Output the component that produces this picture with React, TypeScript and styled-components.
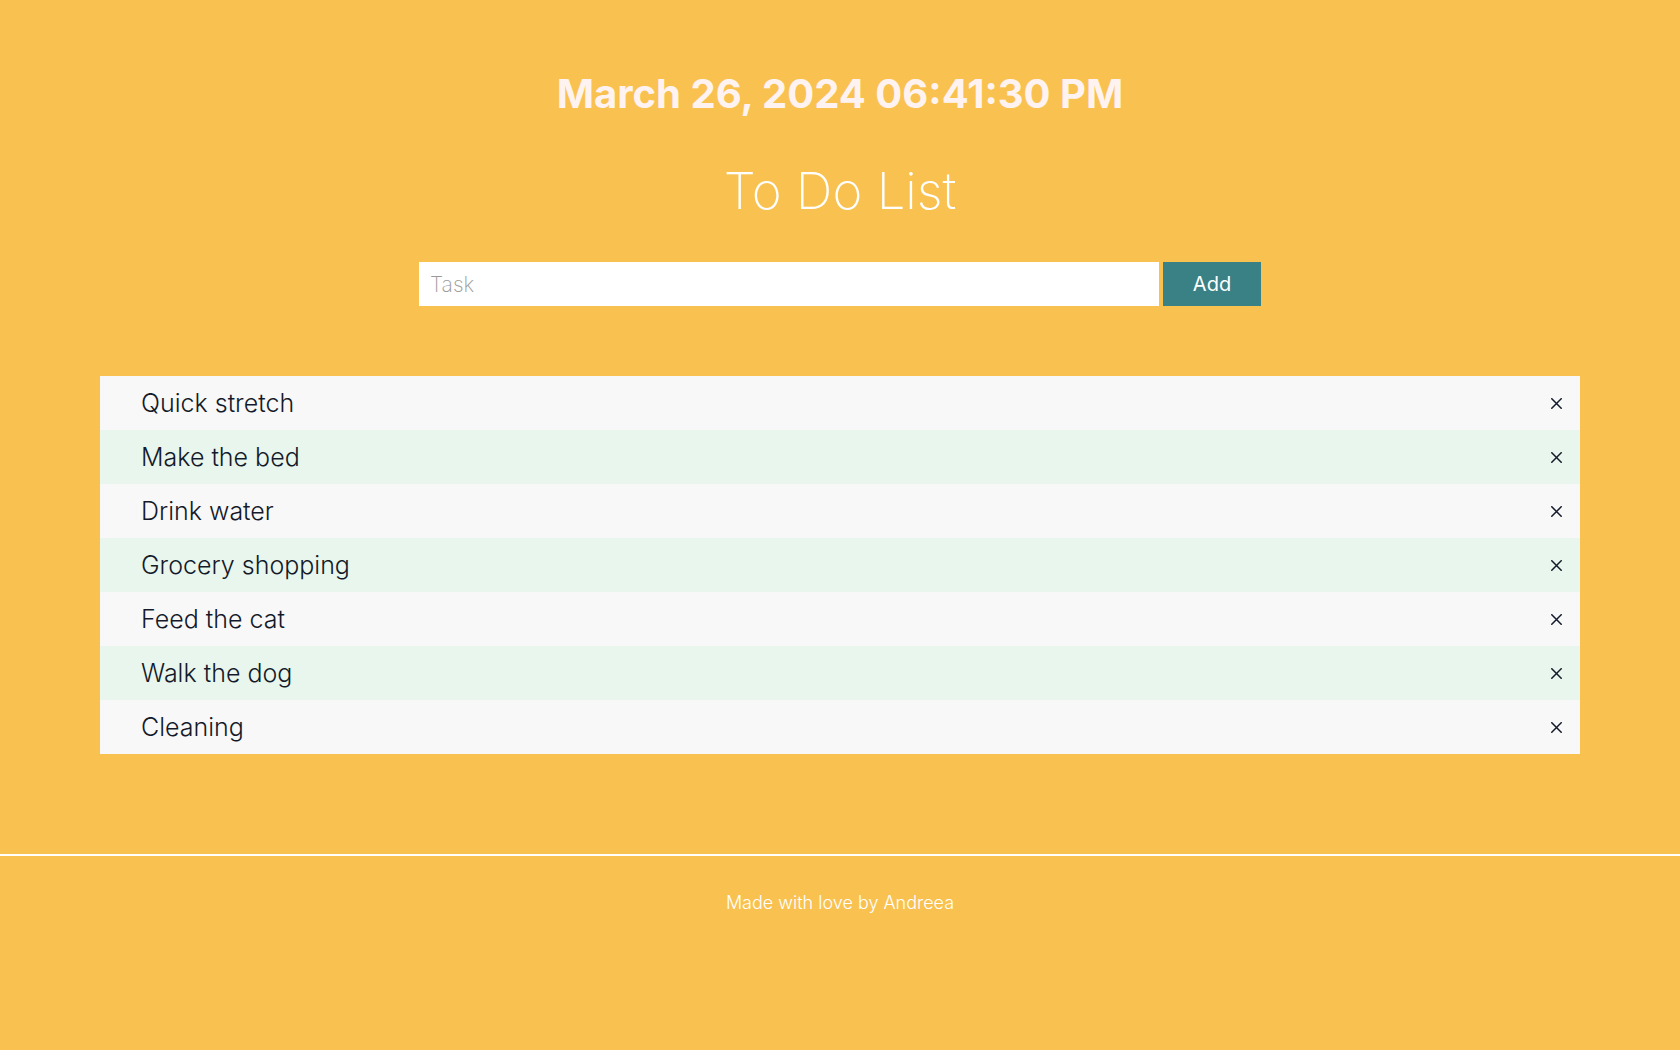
import React from "react";
import styled, { createGlobalStyle } from "styled-components";

const GlobalStyle = createGlobalStyle`
  html, body {
    margin: 0;
    padding: 0;
    background: #f9c250;
    font-family: Inter, "Noto Sans", sans-serif;
  }
  * { box-sizing: border-box; }
`;

const Page = styled.div`
  min-height: 1050px;
  background: #f9c250;
  display: flex;
  flex-direction: column;
  padding-top: 70px;
`;

const Main = styled.main`
  display: flex;
  flex-direction: column;
  align-items: center;
  padding: 0 100px;
`;

const Clock = styled.h2`
  margin: 0;
  height: 49px;
  font-size: 40px;
  font-weight: 700;
  color: #fff3f2;
  line-height: 1.21;
`;

const Title = styled.h1`
  margin: 41px 0 0;
  height: 62px;
  font-size: 51px;
  font-weight: 200;
  color: #ffffff;
  line-height: 1.21;
`;

const Form = styled.form`
  display: flex;
  gap: 4px;
  margin-top: 40px;
`;

const Input = styled.input`
  width: 740px;
  height: 44px;
  border: none;
  outline: none;
  padding: 0 11px;
  font-family: Inter, sans-serif;
  font-size: 21px;
  font-weight: 200;
  color: #222;
  background: #fff;
  &::placeholder {
    color: #9a9a9a;
  }
`;

const AddButton = styled.button`
  width: 98px;
  height: 44px;
  border: none;
  background: #398184;
  color: #ffffff;
  font-family: Inter, sans-serif;
  font-size: 20px;
  font-weight: 400;
  cursor: pointer;
`;

const List = styled.ul`
  list-style: none;
  margin: 70px 0 0;
  padding: 0;
  width: 100%;
`;

const Row = styled.li<{ $alt: boolean }>`
  height: 54px;
  display: flex;
  align-items: center;
  justify-content: space-between;
  padding: 0 12px 0 41px;
  background: ${(p) => (p.$alt ? "#e9f6ed" : "#f8f8f8")};
`;

const TaskText = styled.span`
  font-size: 25px;
  font-weight: 300;
  color: #141a2a;
`;

const DeleteButton = styled.button`
  width: 24px;
  height: 24px;
  border: none;
  background: transparent;
  padding: 0;
  display: flex;
  align-items: center;
  justify-content: center;
  cursor: pointer;
`;

const Footer = styled.footer`
  margin-top: 100px;
  border-top: 2px solid #ffffff;
  padding-top: 36px;
  text-align: center;
  font-size: 18px;
  font-weight: 300;
  color: #ffffff;
`;

const tasks = [
  "Quick stretch",
  "Make the bed",
  "Drink water",
  "Grocery shopping",
  "Feed the cat",
  "Walk the dog",
  "Cleaning",
];

const CloseIcon = () => (
  <svg width="11" height="11" viewBox="0 0 11 11">
    <path d="M0.8 0.8 L10.2 10.2 M10.2 0.8 L0.8 10.2" stroke="#141a2a" strokeWidth="1.5" strokeLinecap="square" />
  </svg>
);

export default function App() {
  return (
    <>
      <GlobalStyle />
      <Page>
        <Main>
          <Clock>March 26, 2024 06:41:30 PM</Clock>
          <Title>To Do List</Title>
          <Form onSubmit={(e) => e.preventDefault()}>
            <Input placeholder="Task" />
            <AddButton type="submit">Add</AddButton>
          </Form>
          <List>
            {tasks.map((t, i) => (
              <Row key={t} $alt={i % 2 === 1}>
                <TaskText>{t}</TaskText>
                <DeleteButton aria-label="delete">
                  <CloseIcon />
                </DeleteButton>
              </Row>
            ))}
          </List>
        </Main>
        <Footer>Made with love by Andreea</Footer>
      </Page>
    </>
  );
}
